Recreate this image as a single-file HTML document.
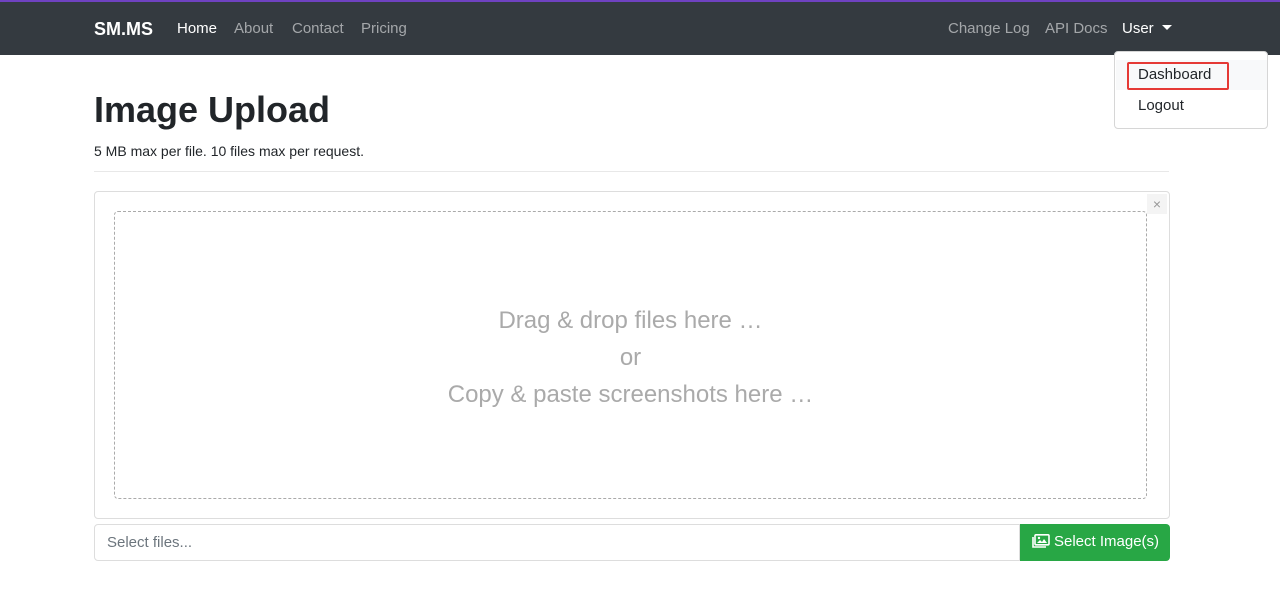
<!DOCTYPE html>
<html><head><meta charset="utf-8"><style>
*{box-sizing:border-box;margin:0;padding:0}
body{width:1280px;height:609px;background:#fff;font-family:"Liberation Sans",sans-serif;color:#212529;position:relative;overflow:hidden}
.nav{position:absolute;left:0;top:0;width:1280px;height:55px;background:#343a40;border-top:2px solid #6f42c1}
.nav span{position:absolute;top:18px;font-size:15px;color:rgba(255,255,255,.55)}
.brand{font-size:18px!important;color:#fff!important;top:17px!important;left:94px;font-weight:bold}
.caret{display:inline-block;border-top:5px solid #fff;border-left:5px solid transparent;border-right:5px solid transparent;margin-left:8px;vertical-align:3px}
.dd{position:absolute;left:1114px;top:51px;width:154px;height:78px;border:1px solid #d6d6d6;border-radius:4px;background:#fff}
.dd div{position:absolute;left:23px;font-size:15px}
h1{position:absolute;left:94px;top:89px;font-size:36px;font-weight:bold}
.sub{position:absolute;left:94px;top:143px;font-size:14px}
hr{position:absolute;left:94px;top:171px;width:1075px;border:0;border-top:1px solid #e8e8e8}
.box{position:absolute;left:94px;top:191px;width:1076px;height:328px;border:1px solid #ddd;border-radius:4px}
.drop{position:absolute;left:114px;top:211px;width:1033px;height:288px;border:1px dashed #aaa;border-radius:4px;text-align:center;color:#aaa;font-size:24px;line-height:37px;padding-top:90px}
.x{position:absolute;left:1147px;top:194px;width:20px;height:20px;background:#f4f4f4;color:#999;font-size:14px;text-align:center;line-height:20px}
.inp{position:absolute;left:94px;top:524px;width:926px;height:37px;border:1px solid #ddd;border-radius:4px 0 0 4px;font-size:15px;color:#6c757d;padding:9px 12px}
.btn{position:absolute;left:1020px;top:524px;width:150px;height:37px;background:#28a745;border-radius:0 4px 4px 0;color:#fff;font-size:15px;padding:9px 0 0 12px}
</style></head><body>
<div class="nav">
<span class="brand">SM.MS</span>
<span style="left:177px;color:#fff">Home</span>
<span style="left:234px">About</span>
<span style="left:292px">Contact</span>
<span style="left:361px">Pricing</span>
<span style="left:948px">Change Log</span>
<span style="left:1045px">API Docs</span>
<span style="left:1122px;color:#fff">User<i class="caret"></i></span>
</div>
<div class="dd">
<div style="left:1px;top:8px;width:151px;height:30px;background:#f8f9fa"></div>
<div style="left:12px;top:10px;width:102px;height:28px;border:2px solid #e53935;border-radius:2px"></div>
<div style="top:14px">Dashboard</div>
<div style="top:45px">Logout</div>
</div>
<h1>Image Upload</h1>
<div class="sub">5 MB max per file. 10 files max per request.</div>
<hr>
<div class="box"></div>
<div class="x">×</div>
<div class="drop">Drag &amp; drop files here …<br>or<br>Copy &amp; paste screenshots here …</div>
<div class="inp">Select files...</div>
<div class="btn"><svg width="18" height="14" viewBox="0 0 18 14" style="vertical-align:-2px;margin-right:4px"><rect x="3" y="0.8" width="14" height="10" rx="1" fill="none" stroke="#fff" stroke-width="1.6"/><path d="M1 3v10h13" fill="none" stroke="#fff" stroke-width="1.6"/><path d="M5 9l3-3 2 2 2-3 3 4z" fill="#fff"/><circle cx="7" cy="4" r="1.2" fill="#fff"/></svg>Select Image(s)</div>
</body></html>
